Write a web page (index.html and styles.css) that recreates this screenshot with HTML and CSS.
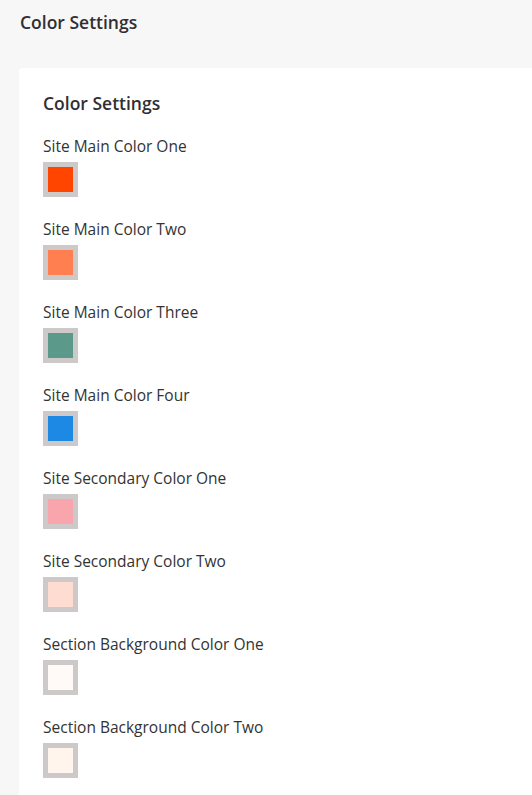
FILE: index.html
```html
<!DOCTYPE html>
<html>
<head>
  <link rel="stylesheet" href="styles.css">
</head>
<body>
  <h1 class="page-title">Color Settings</h1>

  <div class="card">
    <h2 class="card-title">Color Settings</h2>

    <div class="field">
      <label>Site Main Color One</label>
      <div class="swatch"><span style="background:#ff4500"></span></div>
    </div>
    <div class="field">
      <label>Site Main Color Two</label>
      <div class="swatch"><span style="background:#ff7f50"></span></div>
    </div>
    <div class="field">
      <label>Site Main Color Three</label>
      <div class="swatch"><span style="background:#5b9a8b"></span></div>
    </div>
    <div class="field">
      <label>Site Main Color Four</label>
      <div class="swatch"><span style="background:#1e88e5"></span></div>
    </div>
    <div class="field">
      <label>Site Secondary Color One</label>
      <div class="swatch"><span style="background:#f8a5ab"></span></div>
    </div>
    <div class="field">
      <label>Site Secondary Color Two</label>
      <div class="swatch"><span style="background:#ffdcd1"></span></div>
    </div>
    <div class="field">
      <label>Section Background Color One</label>
      <div class="swatch"><span style="background:#fffaf8"></span></div>
    </div>
    <div class="field">
      <label>Section Background Color Two</label>
      <div class="swatch"><span style="background:#fff5ec"></span></div>
    </div>
  </div>
</body>
</html>
```

FILE: styles.css
```css
body {
  font-family: "Open Sans", sans-serif;
  margin: 0;
  background: #f7f7f7;
  color: #2f2f33;
  overflow: hidden;
}

.page-title {
  font-size: 17.5px;
  font-weight: 600;
  line-height: 22px;
  margin: 0;
  padding: 11px 20px 0;
}

.card {
  margin: 35px 0 0 19px;
  padding: 24px;
  background: #fff;
  border-radius: 4px 0 0 0;
  min-height: 800px;
}

.card-title {
  font-size: 17.5px;
  font-weight: 600;
  line-height: 22px;
  margin: 0 0 22px 0;
}

.field {
  margin-bottom: 22px;
}

label {
  display: block;
  font-size: 15.5px;
  line-height: 20px;
  color: #333;
}

.swatch {
  width: 25px;
  height: 25px;
  margin-top: 6px;
  border: 5px solid #cdc9c8;
}

.swatch span {
  display: block;
  width: 100%;
  height: 100%;
}
```
